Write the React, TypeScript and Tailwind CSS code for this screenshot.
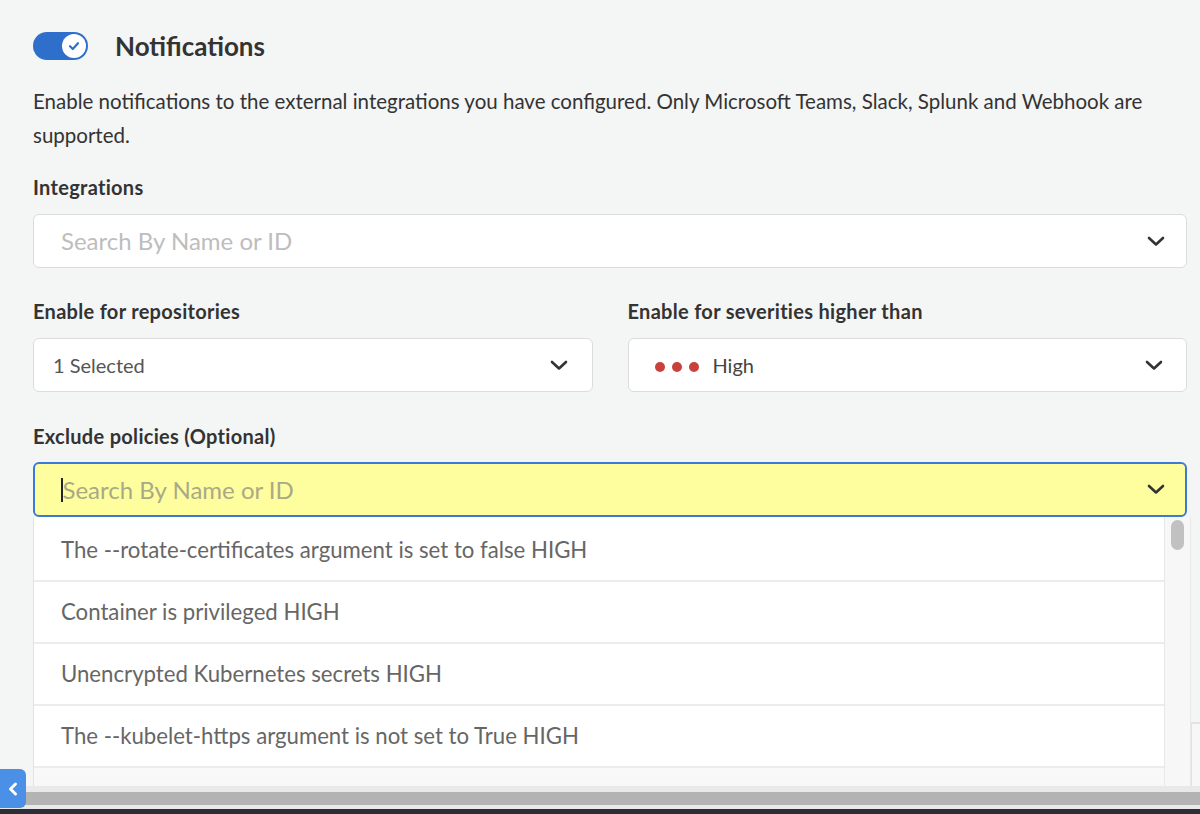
import { useState } from "react";

const policies = [
  "The --rotate-certificates argument is set to false HIGH",
  "Container is privileged HIGH",
  "Unencrypted Kubernetes secrets HIGH",
  "The --kubelet-https argument is not set to True HIGH",
];

function Chevron() {
  return (
    <svg width="18" height="11" viewBox="0 0 18 11" fill="none">
      <path d="M2 2 L9 8.5 L16 2" stroke="#333" strokeWidth="2.6" strokeLinecap="round" strokeLinejoin="round" />
    </svg>
  );
}

function Toggle({ on, onClick }: { on: boolean; onClick: () => void }) {
  return (
    <button
      type="button"
      onClick={onClick}
      className={`flex h-[28px] w-[55px] items-center rounded-full px-[2px] ${on ? "justify-end bg-[#2e6fcc]" : "justify-start bg-gray-300"}`}
    >
      <span className="flex h-[24px] w-[24px] items-center justify-center rounded-full bg-white">
        {on && (
          <svg width="14" height="14" viewBox="0 0 14 14" fill="none">
            <path d="M3 7.2 L5.8 10 L11 4.2" stroke="#2e6fcc" strokeWidth="2.2" strokeLinecap="round" strokeLinejoin="round" />
          </svg>
        )}
      </span>
    </button>
  );
}

function App() {
  const [enabled, setEnabled] = useState(true);

  return (
    <div className="relative flex h-screen flex-col overflow-hidden bg-[#f4f5f5] font-['Lato',sans-serif] text-[#333]">
      <main className="flex-1 overflow-hidden pl-[33px] pr-[13px] pt-[32px]">
        <header className="flex h-[28px] items-center gap-[27px]">
          <Toggle on={enabled} onClick={() => setEnabled(!enabled)} />
          <h1 className="text-[26px] font-bold">Notifications</h1>
        </header>

        <p className="mt-[24px] text-[20.5px] leading-[34px]">
          Enable notifications to the external integrations you have configured. Only Microsoft Teams, Slack, Splunk and Webhook are supported.
        </p>

        <label className="mt-[23px] block text-[20px] font-bold leading-[24px] tracking-[0.3px]">Integrations</label>
        <div className="mt-[15px] flex h-[54px] items-center justify-between rounded-md border border-[#dcdcdc] bg-white pl-[27px] pr-[21px]">
          <span className="text-[24px] text-[#bdbdbd]">Search By Name or ID</span>
          <Chevron />
        </div>

        <div className="mt-[31px] grid grid-cols-2 gap-[35px]">
          <div>
            <label className="block text-[20px] font-bold leading-[24px] tracking-[0.3px]">Enable for repositories</label>
            <div className="mt-[15px] flex h-[54px] items-center justify-between rounded-md border border-[#dcdcdc] bg-white pl-[19px] pr-[24px]">
              <span className="text-[20px] text-[#555]">1 Selected</span>
              <Chevron />
            </div>
          </div>
          <div>
            <label className="block text-[20px] font-bold leading-[24px] tracking-[0.3px]">Enable for severities higher than</label>
            <div className="mt-[15px] flex h-[54px] items-center justify-between rounded-md border border-[#dcdcdc] bg-white pl-[26px] pr-[23px]">
              <span className="flex items-center">
                <span className="mt-[4px] flex gap-[7px]">
                  <span className="h-[10px] w-[10px] rounded-full bg-[#c8413d]" />
                  <span className="h-[10px] w-[10px] rounded-full bg-[#c8413d]" />
                  <span className="h-[10px] w-[10px] rounded-full bg-[#c8413d]" />
                </span>
                <span className="ml-[14px] text-[20px] text-[#444]">High</span>
              </span>
              <Chevron />
            </div>
          </div>
        </div>

        <label className="mt-[32px] block text-[20px] font-bold leading-[24px] tracking-[0.3px]">Exclude policies (Optional)</label>
        <div className="mt-[14px] flex h-[55px] items-center justify-between rounded-md border-2 border-[#3b7ad8] bg-[#fefe9e] pl-[26px] pr-[20px]">
          <span className="flex items-center">
            <span className="h-[24px] w-[1.5px] bg-[#222]" />
            <span className="text-[24px] text-[#aaa987]">Search By Name or ID</span>
          </span>
          <Chevron />
        </div>

        <div className="mr-[-13px] flex">
          <div className="flex w-[1158px] border-l border-[#e3e3e3] bg-white">
            <ul className="flex-1 pt-[3px]">
              {policies.map((p) => (
                <li key={p} className="flex h-[62px] items-center border-b-2 border-[#ececec] pl-[27px] text-[22.2px] text-[#666]">
                  {p}
                </li>
              ))}
              <li className="h-[62px] bg-gradient-to-b from-[#f9f9f9] to-[#f3f3f3]" />
            </ul>
            <div className="w-[27px] border-x border-[#e8e8e8] bg-[#f7f7f7] pt-[3px]">
              <div className="mx-auto h-[30px] w-[13px] rounded-full bg-[#c1c1c1]" />
            </div>
          </div>
          <div className="mt-[205px] h-[300px] flex-1 border-l border-t-2 border-[#e2e2e2] bg-[#f7f7f7]" />
        </div>
      </main>

      <div className="flex h-[23px] flex-col bg-[#e9e9e9] py-[6px] pb-[4px]">
        <div className="flex-1 bg-[#b3b3b3]" />
      </div>
      <div className="h-[5px] bg-[#2b2f35]" />

      <button
        type="button"
        className="absolute bottom-[6px] left-0 flex h-[39px] w-[26px] items-center justify-center rounded-r-md bg-[#4a90e6]"
      >
        <svg width="12" height="16" viewBox="0 0 12 16" fill="none">
          <path d="M8.5 3 L3.5 8 L8.5 13" stroke="white" strokeWidth="3" strokeLinecap="round" strokeLinejoin="round" />
        </svg>
      </button>
    </div>
  );
}

export default App;
